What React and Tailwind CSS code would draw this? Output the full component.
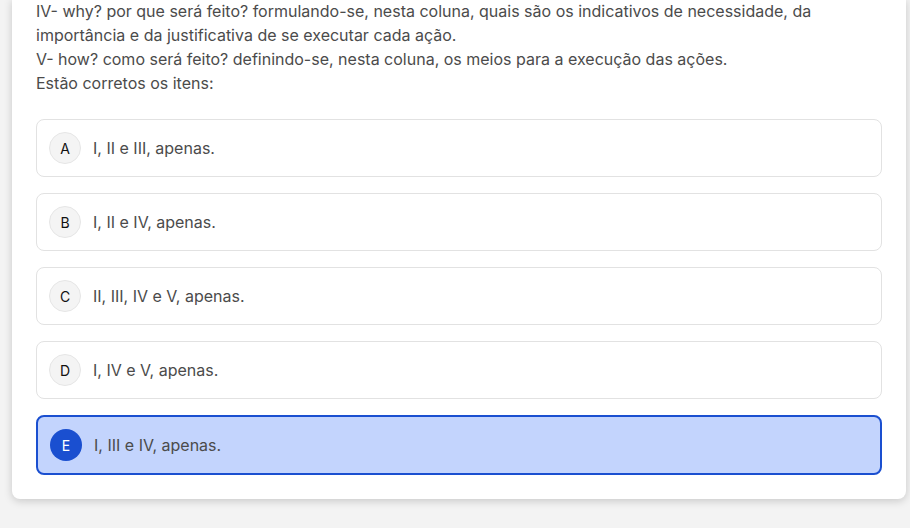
const opcoes = [
  { letra: 'A', texto: 'I, II e III, apenas.' },
  { letra: 'B', texto: 'I, II e IV, apenas.' },
  { letra: 'C', texto: 'II, III, IV e V, apenas.' },
  { letra: 'D', texto: 'I, IV e V, apenas.' },
  { letra: 'E', texto: 'I, III e IV, apenas.' },
];

const selecionada = 'E';

export default function App() {
  return (
    <div className="bg-[#f3f3f3] h-[528px] overflow-hidden font-['Inter',sans-serif]">
      <div className="ml-3 w-[894px] bg-white rounded-b-lg shadow-[0_2px_8px_rgba(0,0,0,0.18)] px-6 pb-6">
        <div className="text-[16px] leading-6 text-[#4b4b4b] -mt-px">
          <p>
            IV- why? por que será feito? formulando-se, nesta coluna, quais são os indicativos de necessidade, da
            importância e da justificativa de se executar cada ação.
          </p>
          <p>V- how? como será feito? definindo-se, nesta coluna, os meios para a execução das ações.</p>
          <p>Estão corretos os itens:</p>
        </div>

        <div className="mt-[24px] flex flex-col gap-4">
          {opcoes.map((op) => {
            const ativa = op.letra === selecionada;
            return (
              <button
                key={op.letra}
                className={`flex items-center gap-3 rounded-lg text-left ${
                  ativa
                    ? 'h-[60px] bg-[#c3d4fd] border-2 border-[#1a4fd0] px-3'
                    : 'h-[58px] bg-white border border-[#e2e2e2] px-3'
                }`}
              >
                <span
                  className={`w-8 h-8 rounded-full flex items-center justify-center text-[14px] ${
                    ativa ? 'bg-[#1a4fd0] text-white' : 'bg-[#f4f4f4] border border-[#e6e6e6] text-[#111]'
                  }`}
                >
                  {op.letra}
                </span>
                <span className="text-[16px] text-[#4b4b4b]">{op.texto}</span>
              </button>
            );
          })}
        </div>
      </div>
    </div>
  );
}
